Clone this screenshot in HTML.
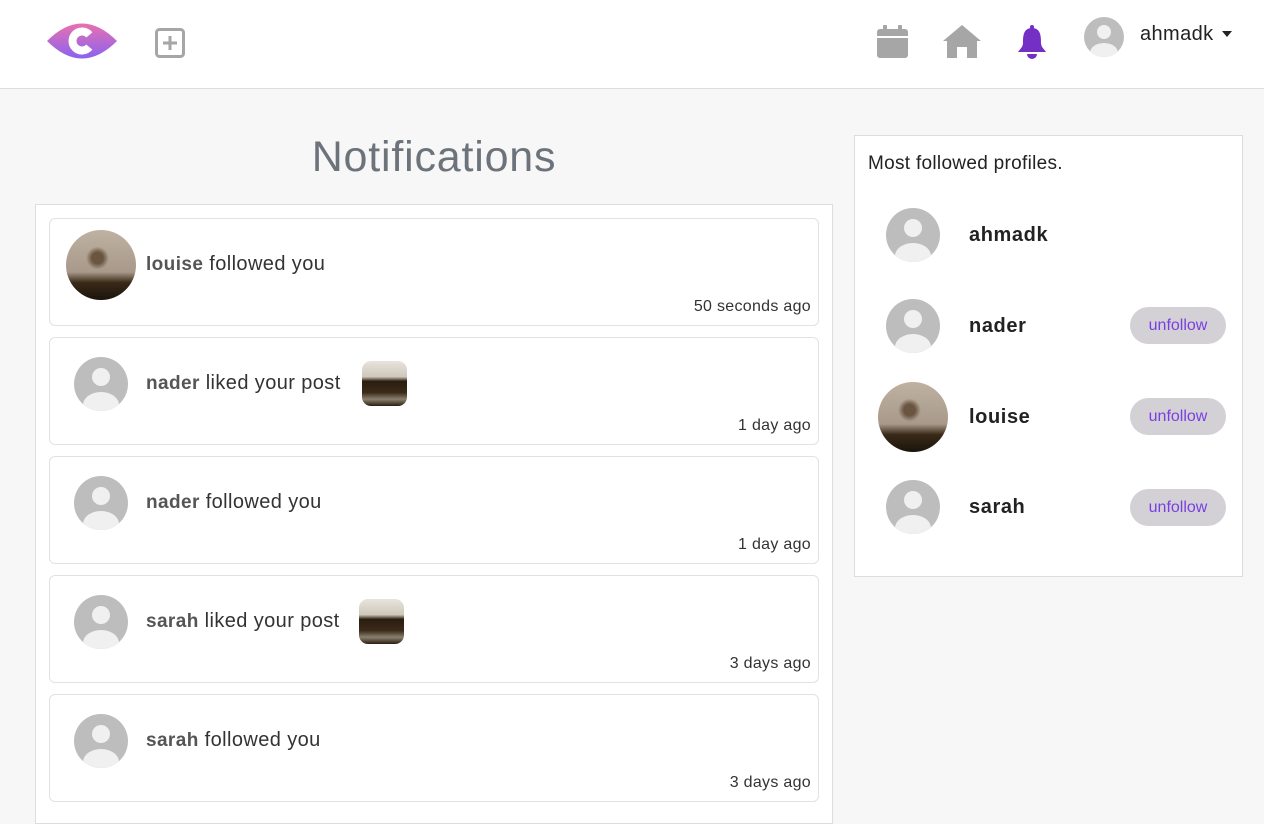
<!DOCTYPE html>
<html><head><style>
*{box-sizing:border-box;margin:0;padding:0}
body{width:1264px;height:812px;overflow:hidden;background:#f7f7f7;font-family:"Liberation Sans",sans-serif;color:#222;position:relative}
.nav{position:absolute;left:0;top:0;width:1264px;height:89px;background:#fff;border-bottom:1px solid #ddd}
.abs{position:absolute}
.av{position:absolute;border-radius:50%;overflow:hidden;background:#bdbdbd}
.photo{background:radial-gradient(circle at 45% 40%,#6a5540 0 10%,transparent 20%),linear-gradient(#bfb2a2 0%,#a8998a 60%,#3a2a18 75%,#1a140c 100%)}
.card{position:absolute;left:49px;width:770px;height:108px;background:#fff;border:1px solid #e2e2e2;border-radius:6px}
.card .t{position:absolute;left:96px;top:34px;font-size:20px;color:#333;letter-spacing:0.4px}
.card .t b{color:#555;font-size:19px}
.card .time{position:absolute;right:7px;bottom:9px;font-size:16px;color:#333;letter-spacing:0.3px}
.thumb{position:absolute;width:45px;height:45px;border-radius:9px;background:linear-gradient(#e8e4dc 0%,#cfc8bb 35%,#2a1d10 45%,#3b2a18 70%,#8a8070 85%,#2a1d10 100%)}
.btn{position:absolute;left:1130px;width:96px;height:37px;border-radius:19px;background:#d3d1d6;color:#7a3fe0;font-size:16px;text-align:center;line-height:37px}
.sn{position:absolute;left:969px;font-size:20px;font-weight:bold;color:#222;letter-spacing:0.6px}
</style></head><body>
<div class="nav">
<svg class="abs" style="left:46px;top:23px" width="72" height="36" viewBox="0 0 72 36"><defs><linearGradient id="g" x1="0" y1="0" x2="0" y2="1"><stop offset="0" stop-color="#e970b0"/><stop offset="1" stop-color="#8a63f0"/></linearGradient></defs><path d="M1 18 Q36 -17 71 18 Q36 53 1 18Z" fill="url(#g)"/><path d="M43.3 11.9 A9.5 9.5 0 1 0 43.3 24.1" stroke="#fff" stroke-width="8" fill="none"/></svg>
<svg class="abs" style="left:155px;top:28px" width="30" height="30" viewBox="0 0 30 30"><rect x="1.5" y="1.5" width="27" height="27" rx="3" fill="none" stroke="#a6a6a6" stroke-width="3"/><path d="M15 8v14M8 15h14" stroke="#a6a6a6" stroke-width="3"/></svg>
<svg class="abs" style="left:877px;top:25px" width="31" height="33" viewBox="0 0 31 33"><rect x="0" y="4" width="31" height="29" rx="3" fill="#a6a6a6"/><rect x="6" y="0" width="4" height="8" rx="1" fill="#a6a6a6"/><rect x="21" y="0" width="4" height="8" rx="1" fill="#a6a6a6"/><rect x="0" y="11" width="31" height="2" fill="#fff"/></svg>
<svg class="abs" style="left:943px;top:25px" width="38" height="33" viewBox="0 0 38 33"><path d="M19 0 L38 16 L34 16 L34 33 L24 33 L24 22 L14 22 L14 33 L4 33 L4 16 L0 16Z" fill="#a6a6a6"/></svg>
<svg class="abs" style="left:1017px;top:25px" width="30" height="34" viewBox="0 0 30 34"><rect x="13" y="0" width="4" height="5" rx="2" fill="#7430c4"/><path d="M15 3 C6 3 6 12 6 18 C6 22 3 24 1 27 L29 27 C27 24 24 22 24 18 C24 12 24 3 15 3Z" fill="#7430c4"/><path d="M10 29 h10 a5 5 0 0 1 -10 0z" fill="#7430c4"/></svg>
<div class="av" style="left:1084px;top:17px;width:40px;height:40px"><div class="abs" style="left:13px;top:8px;width:14px;height:14px;border-radius:50%;background:#f0f0f0"></div><div class="abs" style="left:6px;top:26px;width:28px;height:20px;border-radius:50%;background:#f0f0f0"></div></div>
<div class="abs" style="left:1140px;top:23px;font-size:20px;color:#222;letter-spacing:0.4px">ahmadk</div>
<div class="abs" style="left:1222px;top:31px;border-left:5px solid transparent;border-right:5px solid transparent;border-top:6px solid #222"></div>
</div>

<div class="abs" style="left:35px;top:133px;width:798px;text-align:center;font-size:43px;color:#6c737a;letter-spacing:0.8px">Notifications</div>
<div class="abs" style="left:35px;top:204px;width:798px;height:620px;background:#fff;border:1px solid #ddd"></div>

<div class="card" style="top:218px"><div class="av photo" style="left:16px;top:11px;width:70px;height:70px"></div><div class="t"><b>louise</b> followed you</div><div class="time">50 seconds ago</div></div>
<div class="card" style="top:337px"><div class="av" style="left:24px;top:19px;width:54px;height:54px"><div class="abs" style="left:18px;top:11px;width:18px;height:18px;border-radius:50%;background:#f0f0f0"></div><div class="abs" style="left:9px;top:35px;width:36px;height:26px;border-radius:50%;background:#f0f0f0"></div></div><div class="t" style="top:34px"><b>nader</b> liked your post</div><div class="thumb" style="left:312px;top:23px"></div><div class="time">1 day ago</div></div>
<div class="card" style="top:456px"><div class="av" style="left:24px;top:19px;width:54px;height:54px"><div class="abs" style="left:18px;top:11px;width:18px;height:18px;border-radius:50%;background:#f0f0f0"></div><div class="abs" style="left:9px;top:35px;width:36px;height:26px;border-radius:50%;background:#f0f0f0"></div></div><div class="t"><b>nader</b> followed you</div><div class="time">1 day ago</div></div>
<div class="card" style="top:575px"><div class="av" style="left:24px;top:19px;width:54px;height:54px"><div class="abs" style="left:18px;top:11px;width:18px;height:18px;border-radius:50%;background:#f0f0f0"></div><div class="abs" style="left:9px;top:35px;width:36px;height:26px;border-radius:50%;background:#f0f0f0"></div></div><div class="t" style="top:34px"><b>sarah</b> liked your post</div><div class="thumb" style="left:309px;top:23px"></div><div class="time">3 days ago</div></div>
<div class="card" style="top:694px"><div class="av" style="left:24px;top:19px;width:54px;height:54px"><div class="abs" style="left:18px;top:11px;width:18px;height:18px;border-radius:50%;background:#f0f0f0"></div><div class="abs" style="left:9px;top:35px;width:36px;height:26px;border-radius:50%;background:#f0f0f0"></div></div><div class="t"><b>sarah</b> followed you</div><div class="time">3 days ago</div></div>

<div class="abs" style="left:854px;top:135px;width:389px;height:442px;background:#fff;border:1px solid #ddd"></div>
<div class="abs" style="left:868px;top:153px;font-size:19px;color:#222;letter-spacing:0.3px">Most followed profiles.</div>

<div class="av" style="left:886px;top:208px;width:54px;height:54px"><div class="abs" style="left:18px;top:11px;width:18px;height:18px;border-radius:50%;background:#f0f0f0"></div><div class="abs" style="left:9px;top:35px;width:36px;height:26px;border-radius:50%;background:#f0f0f0"></div></div>
<div class="sn" style="top:224px">ahmadk</div>
<div class="av" style="left:886px;top:299px;width:54px;height:54px"><div class="abs" style="left:18px;top:11px;width:18px;height:18px;border-radius:50%;background:#f0f0f0"></div><div class="abs" style="left:9px;top:35px;width:36px;height:26px;border-radius:50%;background:#f0f0f0"></div></div>
<div class="sn" style="top:315px">nader</div><div class="btn" style="top:307px">unfollow</div>
<div class="av photo" style="left:878px;top:382px;width:70px;height:70px"></div>
<div class="sn" style="top:406px">louise</div><div class="btn" style="top:398px">unfollow</div>
<div class="av" style="left:886px;top:480px;width:54px;height:54px"><div class="abs" style="left:18px;top:11px;width:18px;height:18px;border-radius:50%;background:#f0f0f0"></div><div class="abs" style="left:9px;top:35px;width:36px;height:26px;border-radius:50%;background:#f0f0f0"></div></div>
<div class="sn" style="top:496px">sarah</div><div class="btn" style="top:489px">unfollow</div>
</body></html>
